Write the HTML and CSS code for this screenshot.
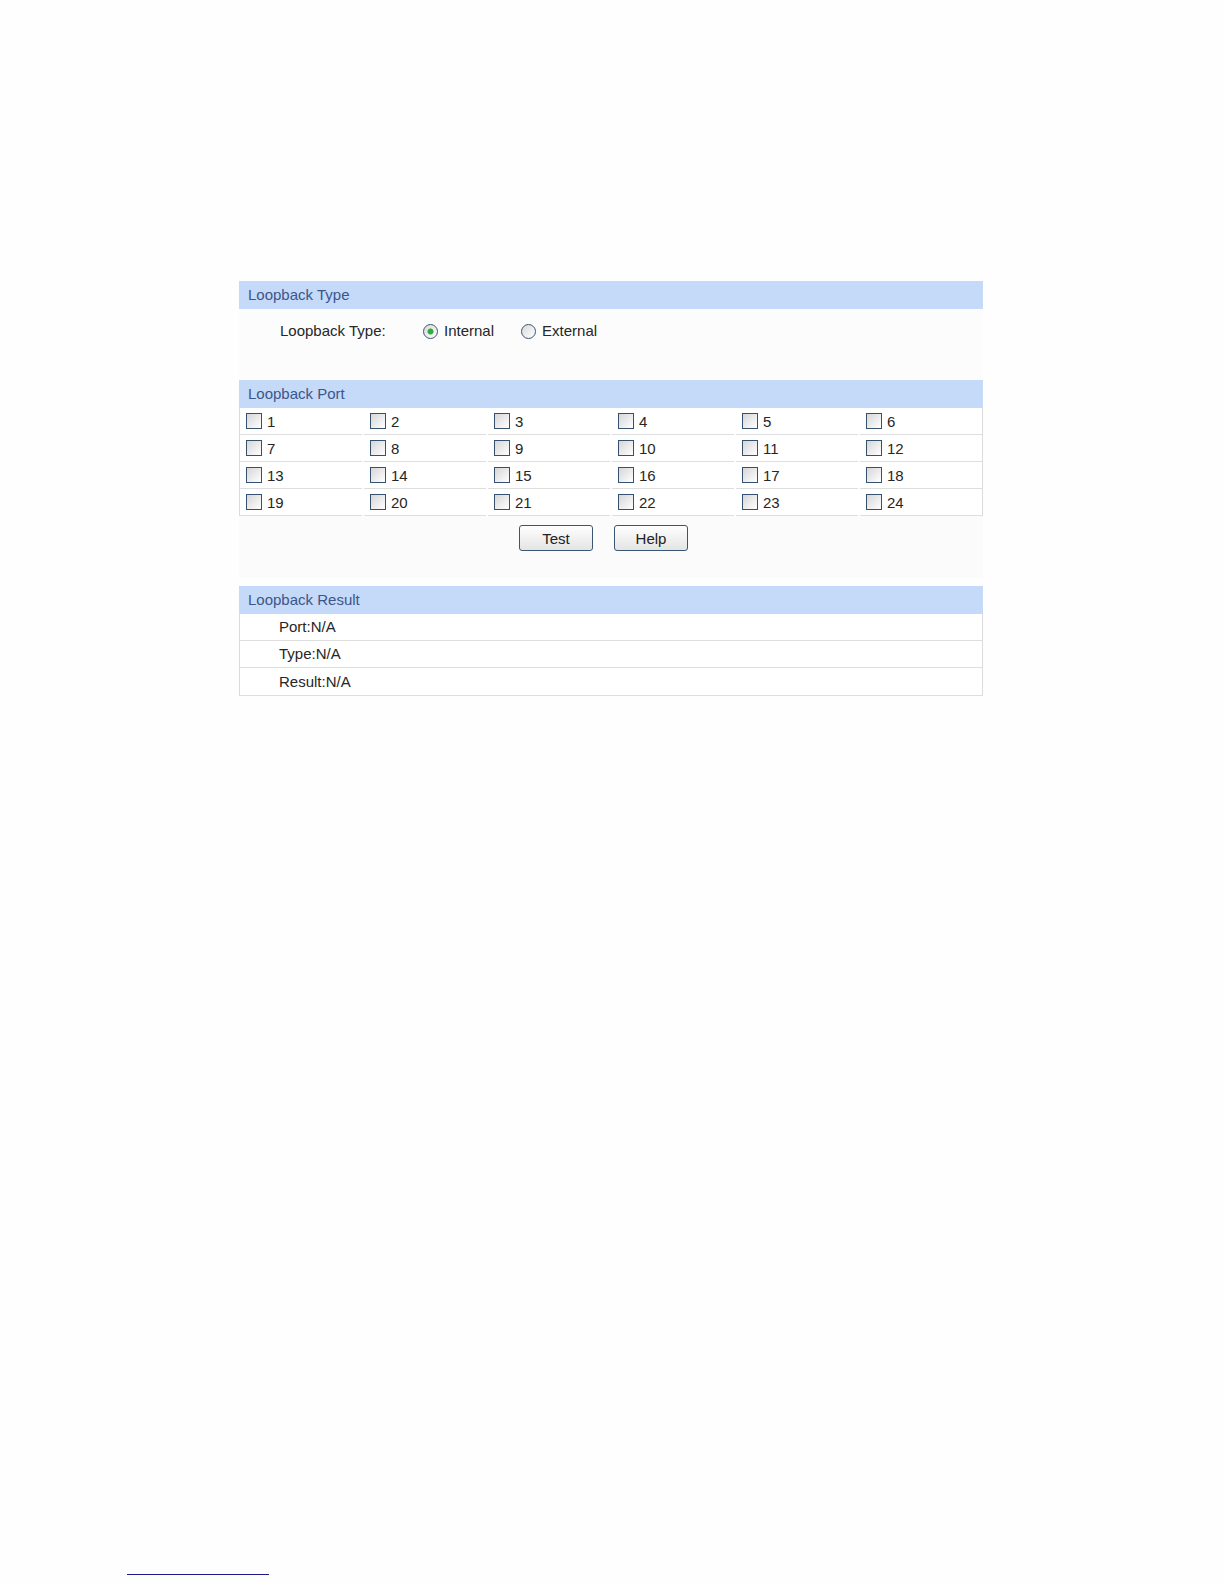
FILE: index.html
```html
<!DOCTYPE html>
<html lang="en">
<head>
    <meta charset="UTF-8">
    <title>Loopback Test</title>
    <link rel="stylesheet" href="styles.css">
</head>
<body>
    <div id="wrapper">
        <!-- 루프백 종류 -->
        <div class="sec-head">Loopback Type</div>
        <div class="type-body">
            <span class="type-label">Loopback Type:</span>
            <label class="opt"><input type="radio" name="ltype" checked>Internal</label>
            <label class="opt"><input type="radio" name="ltype">External</label>
        </div>

        <!-- 포트 선택 -->
        <div class="sec-head">Loopback Port</div>
        <div class="port-grid">
            <label class="cell"><input type="checkbox">1</label>
            <label class="cell"><input type="checkbox">2</label>
            <label class="cell"><input type="checkbox">3</label>
            <label class="cell"><input type="checkbox">4</label>
            <label class="cell"><input type="checkbox">5</label>
            <label class="cell"><input type="checkbox">6</label>
            <label class="cell"><input type="checkbox">7</label>
            <label class="cell"><input type="checkbox">8</label>
            <label class="cell"><input type="checkbox">9</label>
            <label class="cell"><input type="checkbox">10</label>
            <label class="cell"><input type="checkbox">11</label>
            <label class="cell"><input type="checkbox">12</label>
            <label class="cell"><input type="checkbox">13</label>
            <label class="cell"><input type="checkbox">14</label>
            <label class="cell"><input type="checkbox">15</label>
            <label class="cell"><input type="checkbox">16</label>
            <label class="cell"><input type="checkbox">17</label>
            <label class="cell"><input type="checkbox">18</label>
            <label class="cell"><input type="checkbox">19</label>
            <label class="cell"><input type="checkbox">20</label>
            <label class="cell"><input type="checkbox">21</label>
            <label class="cell"><input type="checkbox">22</label>
            <label class="cell"><input type="checkbox">23</label>
            <label class="cell"><input type="checkbox">24</label>
        </div>
        <div class="btn-row">
            <button type="button" class="btn">Test</button>
            <button type="button" class="btn">Help</button>
        </div>

        <!-- 결과 -->
        <div class="sec-head">Loopback Result</div>
        <div class="result">
            <div class="res-row">Port:N/A</div>
            <div class="res-row">Type:N/A</div>
            <div class="res-row">Result:N/A</div>
        </div>
    </div>
    <div class="foot-line"></div>
</body>
</html>
```

FILE: styles.css
```css
body{
    margin: 0;
    background-color: #fefefe;
    font-family: "Liberation Sans", Arial, sans-serif;
    font-size: 15px;
    color: #262626;
}
#wrapper{
    width: 744px;
    margin: 281px 0 0 239px;
}
.sec-head{
    height: 28px;
    line-height: 28px;
    padding-left: 9px;
    background-color: #c5d9f9;
    color: #3b5689;
}
.type-body{
    height: 71px;
    box-sizing: border-box;
    padding: 12px 0 0 41px;
    display: flex;
    align-items: center;
    background-color: #fcfcfc;
    line-height: 20px;
}
.type-body > *{align-self: flex-start;}
.type-label{
    width: 143px;
}
.opt{
    display: flex;
    align-items: center;
    margin-right: 27px;
}
.opt input{
    appearance: none;
    width: 15px;
    height: 15px;
    margin: 0 6px 0 0;
    border: 1px solid #3a5674;
    border-radius: 50%;
    background: linear-gradient(135deg, #d9d9d9, #ffffff);
}
.opt input:checked{
    background: radial-gradient(circle, #2fae3f 0, #2fae3f 2.5px, transparent 3.5px), linear-gradient(135deg, #d9d9d9, #ffffff);
}
.port-grid{
    display: grid;
    grid-template-columns: repeat(6, 1fr);
    column-gap: 2px;
    border-left: 1px solid #dcdcdc;
    border-right: 1px solid #dcdcdc;
    background-color: #fff;
}
.cell{
    height: 26px;
    border-bottom: 1px solid #dedede;
    display: flex;
    align-items: center;
    padding-left: 6px;
}
.cell input{
    appearance: none;
    width: 16px;
    height: 16px;
    margin: 0 5px 0 0;
    border: 1px solid #34526f;
    background: linear-gradient(135deg, #d6d6d6, #ffffff);
}
.btn-row{
    height: 62px;
    margin-bottom: 8px;
    box-sizing: border-box;
    padding: 9px 0 0 280px;
    display: flex;
    align-items: flex-start;
    gap: 21px;
    background-color: #fbfbfb;
}
.btn{
    width: 74px;
    height: 26px;
    padding: 0;
    border: 1px solid #3b5673;
    border-radius: 3px;
    background: linear-gradient(#ffffff, #e4e4e4);
    font-family: inherit;
    font-size: 15px;
    color: #222;
}
.result{
    border-left: 1px solid #dcdcdc;
    border-right: 1px solid #dcdcdc;
    background-color: #fff;
}
.res-row{
    height: 26px;
    line-height: 26px;
    padding-left: 39px;
    border-bottom: 1px solid #dedede;
}
.res-row:last-child{
    height: 27px;
    line-height: 28px;
}
.foot-line{
    width: 142px;
    height: 1px;
    margin: 878px 0 0 127px;
    background-color: #1b1b8a;
}
```
